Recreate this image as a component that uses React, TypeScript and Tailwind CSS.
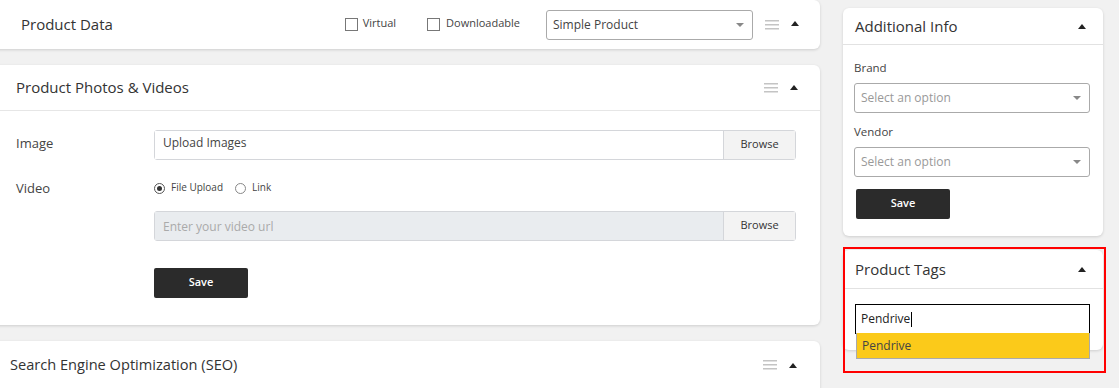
import React from 'react'

const font = { fontFamily: '"Open Sans", "Noto Sans", sans-serif' }

function Bars() {
  return (
    <svg width="14" height="10" viewBox="0 0 14 10" className="shrink-0">
      <rect x="0" y="0" width="14" height="1.5" fill="#c4c4c4" />
      <rect x="0" y="4" width="14" height="1.5" fill="#c4c4c4" />
      <rect x="0" y="8" width="14" height="1.5" fill="#c4c4c4" />
    </svg>
  )
}

function Caret() {
  return (
    <svg width="8" height="5" viewBox="0 0 8 5" className="shrink-0">
      <path d="M0 5 L4 0 L8 5 Z" fill="#222" />
    </svg>
  )
}

function SelectBox({ text, muted }: { text: string; muted?: boolean }) {
  return (
    <div className="flex h-[30px] items-center justify-between rounded-[3px] border border-[#aaa] bg-white pl-[6px] pr-[8px]">
      <span className={`text-[12px] ${muted ? 'text-[#999]' : 'text-[#444]'}`}>{text}</span>
      <svg width="8" height="4" viewBox="0 0 8 4">
        <path d="M0 0 L8 0 L4 4 Z" fill="#888" />
      </svg>
    </div>
  )
}

function FileInput({ placeholder, disabled }: { placeholder: string; disabled?: boolean }) {
  return (
    <div className="flex h-[30px] w-[642px] rounded-[3px] border border-[#d4d6da]">
      <div
        className={`flex flex-1 items-center pl-[8px] text-[12px] ${
          disabled ? 'bg-[#e9ecef] text-[#aaa] pt-[2px]' : 'bg-white text-[#444] pb-[4px]'
        }`}
      >
        {placeholder}
      </div>
      <div className="flex w-[72px] items-center justify-center border-l border-[#d4d6da] bg-[#f3f3f3] pb-px text-[11px] text-[#333]">
        Browse
      </div>
    </div>
  )
}

export default function App() {
  return (
    <div className="flex h-[388px] w-[1119px] gap-[23px] overflow-hidden bg-[#f1f1f1]" style={font}>
      {/* left column */}
      <div className="-ml-2 flex w-[828px] shrink-0 flex-col gap-[16px]">
        {/* product data */}
        <div className="flex h-[49px] shrink-0 items-center rounded-[6px] bg-white pl-[29px] pr-[21px] shadow-[0_1px_3px_rgba(0,0,0,0.15)]">
          <span className="text-[15px] text-[#333]">Product Data</span>
          <div className="ml-auto flex items-center">
            <span className="h-[13px] w-[13px] border border-[#777] bg-white" />
            <span className="ml-[5px] pb-[3px] text-[11px] text-[#444]">Virtual</span>
            <span className="ml-[31px] h-[13px] w-[13px] border border-[#777] bg-white" />
            <span className="ml-[6px] pb-[3px] text-[11px] text-[#444]">Downloadable</span>
            <div className="ml-[26px] w-[207px]">
              <SelectBox text="Simple Product" />
            </div>
            <div className="ml-[12px]">
              <Bars />
            </div>
            <div className="ml-[12px] mb-[2px]">
              <Caret />
            </div>
          </div>
        </div>

        {/* photos & videos */}
        <div className="flex h-[260px] shrink-0 flex-col rounded-[6px] bg-white shadow-[0_1px_3px_rgba(0,0,0,0.15)]">
          <div className="flex h-[46px] items-center border-b border-[#e6e6e6] pl-[24px] pr-[22px]">
            <span className="text-[15px] text-[#333]">Product Photos &amp; Videos</span>
            <div className="ml-auto flex items-center gap-[12px]">
              <Bars />
              <Caret />
            </div>
          </div>
          <div className="flex flex-col pl-[24px] pt-[19px]">
            <div className="flex items-center">
              <span className="w-[138px] pb-[2px] text-[13px] text-[#444]">Image</span>
              <FileInput placeholder="Upload Images" />
            </div>
            <div className="mt-[19px] flex items-center">
              <span className="w-[138px] text-[13px] text-[#444]">Video</span>
              <div className="flex items-center text-[10px] text-[#444]">
                <span className="flex h-[11px] w-[11px] items-center justify-center rounded-full border border-[#555]">
                  <span className="h-[5px] w-[5px] rounded-full bg-[#333]" />
                </span>
                <span className="ml-[6px] pb-[3px]">File Upload</span>
                <span className="ml-[12px] h-[11px] w-[11px] rounded-full border border-[#888]" />
                <span className="ml-[6px] pb-[3px]">Link</span>
              </div>
            </div>
            <div className="ml-[138px] mt-[12px]">
              <FileInput placeholder="Enter your video url" disabled />
            </div>
            <div className="ml-[138px] mt-[27px] flex h-[30px] w-[94px] items-center justify-center rounded-[2px] bg-[#2b2b2b] text-[11px] font-semibold text-white">
              Save
            </div>
          </div>
        </div>

        {/* seo */}
        <div className="flex h-[60px] shrink-0 flex-col rounded-[6px] bg-white shadow-[0_1px_3px_rgba(0,0,0,0.15)]">
          <div className="flex h-[48px] items-center pl-[18px] pr-[23px]">
            <span className="text-[14.6px] text-[#333]">Search Engine Optimization (SEO)</span>
            <div className="ml-auto flex items-center gap-[12px]">
              <Bars />
              <Caret />
            </div>
          </div>
        </div>
      </div>

      {/* right column */}
      <div className="flex w-[260px] shrink-0 flex-col gap-[14px] pt-[8px]">
        <div className="flex h-[228px] shrink-0 flex-col rounded-[6px] bg-white shadow-[0_1px_3px_rgba(0,0,0,0.15)]">
          <div className="flex h-[37px] items-center border-b border-[#e2e2e2] pl-[12px] pr-[17px]">
            <span className="text-[15px] text-[#333]">Additional Info</span>
            <div className="ml-auto">
              <Caret />
            </div>
          </div>
          <div className="flex flex-col pl-[11px] pr-[13px] pt-[14px]">
            <span className="text-[11.5px] text-[#444]">Brand</span>
            <div className="mt-[7px]">
              <SelectBox text="Select an option" muted />
            </div>
            <span className="mt-[10px] text-[11.5px] text-[#444]">Vendor</span>
            <div className="mt-[6px]">
              <SelectBox text="Select an option" muted />
            </div>
            <div className="ml-[2px] mt-[12px] flex h-[30px] w-[94px] items-center justify-center rounded-[2px] bg-[#2b2b2b] text-[11px] font-semibold text-white">
              Save
            </div>
          </div>
        </div>

        <div className="relative">
          <div className="flex h-[100px] flex-col rounded-[6px] bg-white shadow-[0_1px_3px_rgba(0,0,0,0.15)]">
            <div className="flex h-[39px] items-center border-b border-[#e2e2e2] pl-[12px] pr-[17px]">
              <span className="text-[15px] text-[#333]">Product Tags</span>
              <div className="ml-auto">
                <Caret />
              </div>
            </div>
            <div className="relative ml-[12px] mr-[13px] mt-[15px]">
              <div className="flex h-[30px] items-center border border-black bg-white pl-[5px] text-[12px] text-[#222]">
                Pendrive<span className="ml-px h-[15px] w-px bg-black" />
              </div>
              <div className="absolute left-px right-0 top-[29px] flex h-[26px] items-center border border-[#aaa] border-t-0 bg-[#fbca1a] pl-[5px] text-[12px] text-[#444]">
                Pendrive
              </div>
            </div>
          </div>
          <div className="pointer-events-none absolute -top-[3px] left-0 h-[126px] w-[263px] border-2 border-[#ff0000]" />
        </div>
      </div>
    </div>
  )
}
